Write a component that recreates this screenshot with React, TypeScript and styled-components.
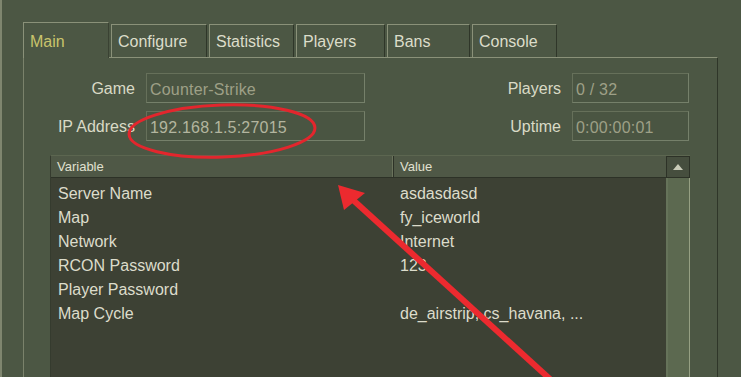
import { Fragment } from 'react';
import styled, { createGlobalStyle } from 'styled-components';

// --- Estilos ---
const GlobalStyle = createGlobalStyle`
  html, body {
    margin: 0;
    padding: 0;
    background: #4c5744;
    overflow: hidden;
  }
`;

const Window = styled.div`
  position: relative;
  width: 741px;
  height: 377px;
  overflow: hidden;
  box-sizing: border-box;
  background: #4c5744;
  border-left: 2px solid #7f866f;
  padding: 22px 0 0 21px;
  font-family: 'Liberation Sans', Arial, sans-serif;
  color: #d9dac6;
`;

const TabRow = styled.div`
  display: flex;
  align-items: flex-end;
  gap: 2px;
  height: 35px;
`;

const Tab = styled.div<{ $active?: boolean; $w: number }>`
  box-sizing: border-box;
  width: ${({ $w }) => $w}px;
  height: ${({ $active }) => ($active ? 36 : 33)}px;
  margin-bottom: ${({ $active }) => ($active ? -1 : 0)}px;
  padding: ${({ $active }) => ($active ? '10px 0 0 6px' : '8px 0 0 6px')};
  font-size: 16px;
  color: ${({ $active }) => ($active ? '#c9c46c' : '#dcddca')};
  background: #4c5744;
  border-top: 1px solid #8a9179;
  border-left: 1px solid #8a9179;
  border-right: 1px solid ${({ $active }) => ($active ? '#3a4233' : '#2f3629')};
  position: relative;
  z-index: ${({ $active }) => ($active ? 2 : 1)};
`;

const Panel = styled.div`
  box-sizing: border-box;
  width: 695px;
  height: 340px;
  border-top: 1px solid #8a9179;
  border-left: 1px solid #7a826b;
  border-right: 1px solid #2f3629;
  padding: 15px 28px 0 0;
`;

const Form = styled.div`
  display: grid;
  grid-template-columns: 111px 219px 1fr 117px;
  grid-auto-rows: 30px;
  column-gap: 11px;
  row-gap: 8px;
`;

const Label = styled.div`
  font-size: 16px;
  text-align: right;
  align-self: center;
  padding-top: 2px;
  color: #d9dac6;
`;

const Field = styled.div<{ $dim?: boolean }>`
  box-sizing: border-box;
  height: 30px;
  padding: 7px 0 0 3px;
  font-size: 16px;
  letter-spacing: 0.2px;
  background: #4a5542;
  border: 1px solid #66705a;
  border-bottom-color: #75806a;
  border-right-color: #75806a;
  color: ${({ $dim }) => ($dim ? '#9ea087' : '#b3b59f')};
  white-space: nowrap;
`;

const Table = styled.div`
  margin: 14px 0 0 26px;
  width: 640px;
  height: 240px;
  box-sizing: border-box;
  border-left: 1px solid #353b2e;
  border-top: 1px solid #5c6650;
  background: #3d4134;
  display: grid;
  grid-template-columns: 343px 272px 24px;
  grid-template-rows: 22px 1fr;
`;

const HeaderCell = styled.div<{ $divider?: boolean }>`
  box-sizing: border-box;
  font-size: 13px;
  padding: 3px 0 0 6px;
  background: #4f5846;
  color: #e0e0d0;
  border-bottom: 1px solid #2d3227;
  border-right: ${({ $divider }) => ($divider ? '1px solid #2d3227' : 'none')};
  box-shadow: ${({ $divider }) => ($divider ? 'inset -1px 0 0 #6a735c' : 'none')};
`;

const ScrollUp = styled.div`
  box-sizing: border-box;
  background: #464e3e;
  border: 1px solid #2d3227;
  display: flex;
  align-items: center;
  justify-content: center;
`;

const Body = styled.div`
  grid-column: 1 / 3;
  display: grid;
  grid-template-columns: 343px 272px;
  grid-auto-rows: 24px;
  padding-top: 4px;
`;

const Cell = styled.div`
  font-size: 16px;
  line-height: 24px;
  padding-left: 7px;
  color: #dcdccb;
  white-space: nowrap;
`;

const ValueCell = styled(Cell)`
  padding-left: 6px;
`;

const Track = styled.div`
  box-sizing: border-box;
  background: #5c6950;
  border-left: 2px solid #66735a;
  border-right: 1px solid #96a083;
`;

const Overlay = styled.svg`
  position: absolute;
  left: 0;
  top: 0;
  pointer-events: none;
`;

const tabs = [
  { name: 'Main', w: 86 },
  { name: 'Configure', w: 96 },
  { name: 'Statistics', w: 85 },
  { name: 'Players', w: 89 },
  { name: 'Bans', w: 83 },
  { name: 'Console', w: 85 },
];

const rows = [
  ['Server Name', 'asdasdasd'],
  ['Map', 'fy_iceworld'],
  ['Network', 'Internet'],
  ['RCON Password', '123'],
  ['Player Password', ''],
  ['Map Cycle', 'de_airstrip, cs_havana, ...'],
];

// --- Componente ---
const App = () => {
  return (
    <>
      <GlobalStyle />
      <Window>
        <TabRow>
          {tabs.map((t, i) => (
            <Tab key={t.name} $active={i === 0} $w={t.w}>
              {t.name}
            </Tab>
          ))}
        </TabRow>
        <Panel>
          <Form>
            <Label>Game</Label>
            <Field $dim>Counter-Strike</Field>
            <Label>Players</Label>
            <Field $dim>0 / 32</Field>
            <Label>IP Address</Label>
            <Field>192.168.1.5:27015</Field>
            <Label>Uptime</Label>
            <Field $dim>0:00:00:01</Field>
          </Form>
          <Table>
            <HeaderCell $divider>Variable</HeaderCell>
            <HeaderCell>Value</HeaderCell>
            <ScrollUp>
              <svg width="10" height="6" viewBox="0 0 10 6">
                <path d="M5 0 L10 6 L0 6 Z" fill="#c9cbb8" />
              </svg>
            </ScrollUp>
            <Body>
              {rows.map(([k, v]) => (
                <Fragment key={k}>
                  <Cell>{k}</Cell>
                  <ValueCell>{v}</ValueCell>
                </Fragment>
              ))}
            </Body>
            <Track />
          </Table>
        </Panel>
        <Overlay width="741" height="377" viewBox="0 0 741 377">
          <ellipse cx="220" cy="131" rx="93" ry="26" fill="none" stroke="#e3262d" strokeWidth="3" transform="rotate(-2 220 131)" />
          <line x1="549" y1="380" x2="350" y2="199" stroke="#ec2a2f" strokeWidth="6" />
          <path d="M336 185 L363 193 L342 210 Z" fill="#ec2a2f" />
        </Overlay>
      </Window>
    </>
  );
};

export default App;
